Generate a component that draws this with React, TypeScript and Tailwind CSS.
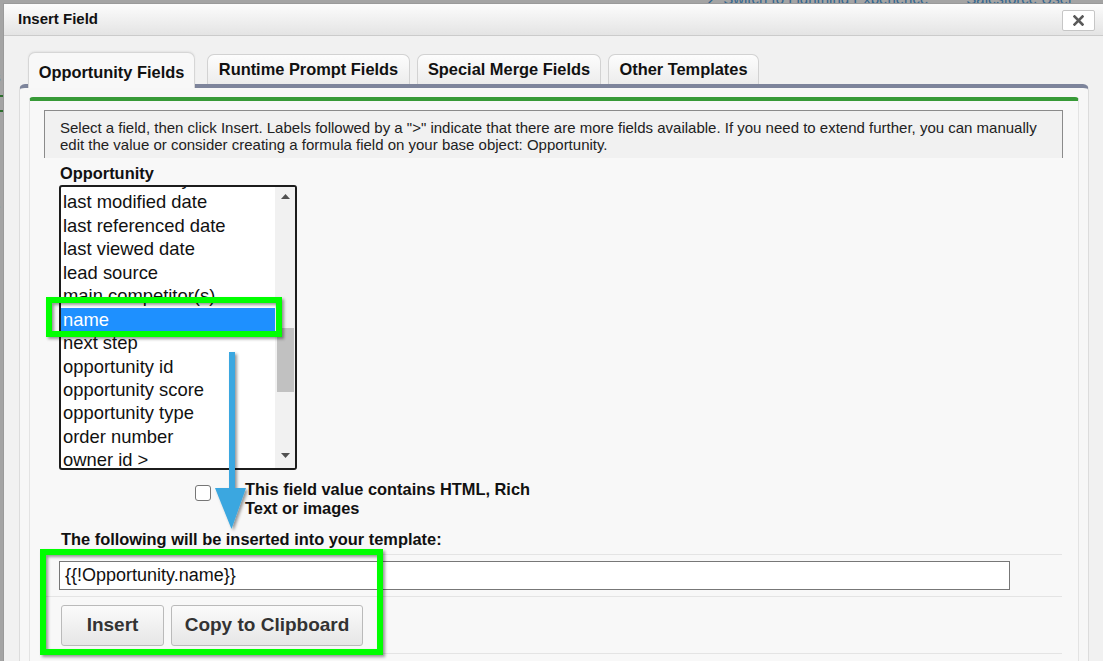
import React from "react";

const items = [
  "last modified by",
  "last modified date",
  "last referenced date",
  "last viewed date",
  "lead source",
  "main competitor(s)",
  "name",
  "next step",
  "opportunity id",
  "opportunity score",
  "opportunity type",
  "order number",
  "owner id >",
  "partner account >",
];

export default function App() {
  return (
    <div className="relative w-[1103px] h-[661px] overflow-hidden bg-[#a4a4a4] font-['Liberation_Sans',Arial,sans-serif]">
      {/* page behind the dialog */}
      <div className="absolute left-0 top-[-12px] flex whitespace-nowrap text-[15px] text-[#33668f]">
        <span className="ml-[706px]">↗ Switch to Lightning Experience</span>
        <span className="ml-[38px]">Salesforce User</span>
      </div>
      <div className="absolute left-[-7px] top-[66px] text-[15px] text-[#333]">s</div>
      <div className="absolute left-0 top-[95px] w-[3px] h-[2px] bg-[#2e6e2e]" />
      <div className="absolute left-0 top-[110px] w-[3px] h-[2px] bg-[#2e6e2e]" />
      <div className="absolute left-[-8px] top-[196px] text-[15px] text-[#333]">e</div>

      {/* dialog */}
      <div className="absolute left-[3px] top-[3px] w-[1130px] h-[700px] bg-[#f1f1f1] border border-[#9a9a9a] flex flex-col">
        <div className="h-[32px] shrink-0 flex items-start justify-between pl-[14px] pr-[37px] bg-gradient-to-b from-[#fcfcfc] to-[#e4e4e4] border-b border-[#cbcbcb]">
          <div className="mt-[6px] leading-[18px] text-[15px] font-bold text-[#111]">Insert Field</div>
          <div className="mt-[6px] w-[33px] h-[21px] bg-white border border-[#c6c6c6] rounded-[2px] flex items-center justify-center">
            <svg width="11" height="11" viewBox="0 0 11 11">
              <path d="M1.5 1.5 L9.5 9.5 M9.5 1.5 L1.5 9.5" stroke="#5a5a5a" strokeWidth="2.6" strokeLinecap="square" />
            </svg>
          </div>
        </div>

        <div className="flex-1 pl-[15px] pt-[16px] flex flex-col">
          {/* tabs */}
          <div className="flex items-end pl-[9px]">
            <div className="relative z-10 w-[167px] h-[36px] -mb-[4px] mr-[12px] bg-[#f8f8f8] border border-b-0 border-[#d6d6d6] rounded-t-[7px] pt-[9px] text-center text-[16.4px] leading-[20px] font-bold text-[#111] shadow-[0_-1px_2px_rgba(0,0,0,0.06)]">
              Opportunity Fields
            </div>
            <div className="w-[203px] h-[30px] mr-[7px] bg-gradient-to-b from-[#fdfdfd] to-[#ececec] border border-b-0 border-[#d2d2d2] rounded-t-[7px] flex items-center justify-center text-[16.4px] font-bold text-[#111]">
              Runtime Prompt Fields
            </div>
            <div className="w-[184px] h-[30px] mr-[7px] bg-gradient-to-b from-[#fdfdfd] to-[#ececec] border border-b-0 border-[#d2d2d2] rounded-t-[7px] flex items-center justify-center text-[16.4px] font-bold text-[#111]">
              Special Merge Fields
            </div>
            <div className="w-[151px] h-[30px] bg-gradient-to-b from-[#fdfdfd] to-[#ececec] border border-b-0 border-[#d2d2d2] rounded-t-[7px] flex items-center justify-center text-[16.4px] font-bold text-[#111]">
              Other Templates
            </div>
          </div>

          {/* panel */}
          <div className="w-[1070px] flex-1 border-t-[4px] border-t-[#7d849b] border-x border-x-[#dcdcdc] rounded-t-[6px] bg-[#f7f7f7] px-[9px] pt-[9px] flex flex-col">
            <div className="flex-1 border-t-[4px] border-t-[#379a37] border-x border-x-[#e3e3e3] rounded-t-[4px] bg-[#f8f8f8] pl-[14px] pr-[15px] pt-[9px]">
              {/* instructions */}
              <div className="border-t border-x border-[#8b8b8b] bg-[#f1f1f1] pl-[15px] pr-[10px] pt-[8px] pb-[5px] text-[15px] leading-[17px] text-[#222]">
                Select a field, then click Insert. Labels followed by a "&gt;" indicate that there are more fields available. If you need to extend further, you can manually edit the value or consider creating a formula field on your base object: Opportunity.
              </div>

              <div className="pl-[16px]">
                <div className="mt-[6px] text-[16.4px] leading-[18px] font-bold text-[#111]">Opportunity</div>
                <div className="mt-[3px] -ml-[1px] w-[238px] h-[285px] border-2 border-[#1c1c1c] rounded-[3px] bg-white flex overflow-hidden">
                  <div className="flex-1 overflow-hidden">
                    <div className="-mt-[20px]">
                      {items.map((it) => (
                        <div
                          key={it}
                          className={
                            it === "name"
                              ? "h-[23.45px] leading-[23.45px] pl-[2px] text-[18.4px] whitespace-nowrap bg-[#1e90ff] text-white"
                              : "h-[23.45px] leading-[23.45px] pl-[2px] text-[18.4px] whitespace-nowrap text-[#111]"
                          }
                        >
                          {it}
                        </div>
                      ))}
                    </div>
                  </div>
                  <div className="w-[20px] bg-[#f1f1f1] flex flex-col">
                    <div className="h-[18px] flex items-center justify-center">
                      <svg width="9" height="5" viewBox="0 0 9 5">
                        <path d="M0 5 L4.5 0 L9 5 Z" fill="#505050" />
                      </svg>
                    </div>
                    <div className="flex-1">
                      <div className="mt-[123px] ml-[2px] mr-[1px] h-[64px] bg-[#c1c1c1]" />
                    </div>
                    <div className="h-[25px] flex items-center justify-center">
                      <svg width="9" height="5" viewBox="0 0 9 5">
                        <path d="M0 0 L9 0 L4.5 5 Z" fill="#505050" />
                      </svg>
                    </div>
                  </div>
                </div>

                <div className="mt-[10px] flex items-start">
                  <div className="ml-[135px] mt-[5px] w-[16px] h-[16px] border border-[#767676] rounded-[3px] bg-white shrink-0" />
                  <div className="ml-[34px] w-[290px] text-[16.4px] leading-[19px] font-bold text-[#111]">
                    This field value contains HTML, Rich Text or images
                  </div>
                </div>

                <div className="mt-[12px] ml-[1px] text-[16.4px] leading-[19px] font-bold text-[#111]">
                  The following will be inserted into your template:
                </div>
              </div>

              <div className="mt-[5px] mr-[1px]">
                <div className="border-t border-[#e4e4e4] pt-[6px] pb-[6px]">
                  <div className="ml-[15px] w-[951px] h-[29px] border border-[#777] bg-white pl-[5px] flex items-center text-[18px] text-[#111]">
                    {"{{!Opportunity.name}}"}
                  </div>
                </div>
                <div className="border-y border-[#e4e4e4] pt-[8px] pb-[7px] pl-[17px] flex gap-[7px]">
                  <div className="w-[103px] h-[41px] rounded-[3px] border border-[#bababa] bg-gradient-to-b from-[#fbfbfb] to-[#e6e6e6] flex items-center justify-center text-[19px] font-bold text-[#333]">
                    Insert
                  </div>
                  <div className="w-[192px] h-[41px] rounded-[3px] border border-[#bababa] bg-gradient-to-b from-[#fbfbfb] to-[#e6e6e6] flex items-center justify-center text-[19px] font-bold text-[#333]">
                    Copy to Clipboard
                  </div>
                </div>
              </div>
            </div>
          </div>
        </div>
      </div>

      {/* annotations */}
      <svg className="absolute left-0 top-0 pointer-events-none" width="1103" height="661" viewBox="0 0 1103 661">
        <defs>
          <filter id="sh" x="-10%" y="-10%" width="130%" height="130%">
            <feDropShadow dx="2" dy="2" stdDeviation="1.5" floodColor="#000" floodOpacity="0.4" />
          </filter>
        </defs>
        <g filter="url(#sh)">
          <rect x="49" y="300" width="230" height="34" fill="none" stroke="#00ff00" strokeWidth="6" />
          <rect x="43" y="552" width="337" height="100" fill="none" stroke="#00ff00" strokeWidth="6" />
          <rect x="229" y="352" width="6" height="138" fill="#3aa7e0" />
          <path d="M215 488 L246 488 L231.5 529 Z" fill="#3aa7e0" />
        </g>
      </svg>
    </div>
  );
}
